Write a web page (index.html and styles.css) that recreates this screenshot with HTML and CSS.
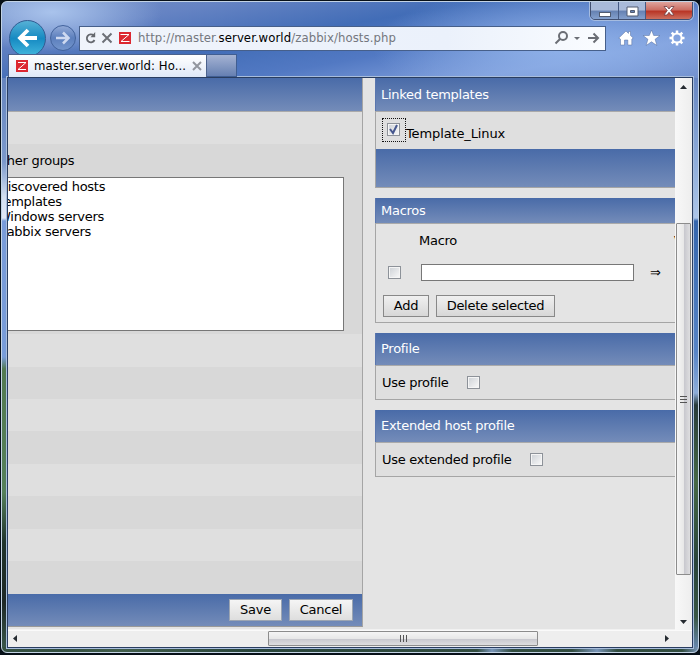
FILE: index.html
```
<!DOCTYPE html>
<html lang="en">
<head>
<meta charset="utf-8">
<title>master.server.world: Hosts</title>
<link rel="stylesheet" href="styles.css">
</head>
<body>
<div class="window">
  <div class="controls">
    <span class="control min"><svg width="14" height="8"><rect x="1.5" y="2.5" width="11" height="4" fill="#fff" stroke="#515b70"/></svg></span>
    <span class="control max"><svg width="13" height="11"><path fill="#fff" fill-rule="evenodd" stroke="#515b70" d="M1 1h11v9H1zM4.500 4.500v2h4v-2z"/></svg></span>
    <span class="control close"><svg width="14" height="12"><path d="M2 1.500h3L7 4l2-2.500h3L8.700 5.500 12 10H9L7 7.300 5 10H2l3.300-4.500z" fill="#fff" stroke="#6e3c43" stroke-width=".8"/></svg></span>
  </div>
  <header class="toolbar">
    <span class="back"><svg width="38" height="38" viewBox="0 0 38 38"><path d="M28 19H12M19 11l-8 8 8 8" fill="none" stroke="#fff" stroke-width="3.800"/></svg></span>
    <span class="forward"><svg width="26" height="26" viewBox="0 0 26 26"><path d="M6 13h12M13 7.500l5.500 5.500-5.500 5.500" fill="none" stroke="#ced9f0" stroke-width="2.500"/></svg></span>
    <div class="address">
      <svg class="reload" width="12" height="14" viewBox="0 0 12 14"><path d="M8.700 4.500A4 4 0 1 0 9.500 9" fill="none" stroke="#66696f" stroke-width="1.800"/><path d="M10.200 1v5.300H5.500z" fill="#66696f"/></svg>
      <svg class="stop" width="12" height="12" viewBox="0 0 12 12"><path d="m1.500 1.500 9 9m0-9-9 9" stroke="#6d7077" stroke-width="2"/></svg>
      <svg class="zicon" width="12" height="12"><path fill="#dc2730" d="M0 0h12v12H0z"/><path d="M1.500 2.500h8.500L2 9.500h8.500" fill="none" stroke="#fff"/></svg>
      <span class="url">http://master.<b>server.world</b>/zabbix/hosts.php</span>
      <svg class="tools" width="48" height="16" viewBox="0 0 48 16"><g fill="none" stroke="#6b6e75" stroke-width="2"><circle cx="9" cy="6" r="4"/><path d="m6 9-4.500 4.500M34 8h9M39.500 3.500 44 8l-4.500 4.500"/></g><path fill="#6b6e75" d="M20 7h6l-3 3z"/></svg>
    </div>
    <div class="actions">
      <svg width="16" height="16" viewBox="0 0 16 16"><path d="M.8 8 8 1l2.500 2.400V1.500h2v4L15.200 8l-1.400 1.100V15h-4v-5H6.500v5h-4V9.200z" fill="#fff" stroke="#526d9f" stroke-width=".5"/></svg>
      <svg width="17" height="16" viewBox="0 0 17 16"><path d="m8.500 0 2.200 5.500H17l-4.900 3.800 1.800 6.200-5.400-3.700-5.400 3.700 1.800-6.200L0 5.500h6.300z" fill="#fff" stroke="#526d9f" stroke-width=".5"/></svg>
      <svg width="16" height="16" viewBox="0 0 16 16"><g fill="none" stroke="#fff"><circle cx="8" cy="8" r="4.600" stroke-width="2"/><path stroke-width="2.500" d="M8 .5v3M8 12.500v3M.5 8h3M12.500 8h3M2.700 2.700l2 2M11.300 11.300l2 2M2.700 13.300l2-2M11.300 4.700l2-2"/></g></svg>
    </div>
  </header>
  <div class="tabs">
    <div class="tab">
      <svg width="12" height="12"><path fill="#dc2730" d="M0 0h12v12H0z"/><path d="M2 2.500h8L2 9.500h8" fill="none" stroke="#fff"/></svg>
      <span class="tab-title">master.server.world: Ho...</span>
      <svg width="10" height="10"><path d="m1 1 8 8m0-8L1 9" stroke="#92969e" stroke-width="2"/></svg>
    </div>
    <div class="newtab"></div>
  </div>
  <div class="viewport">
    <main class="page">
      <section class="groups">
        <div class="band top"></div>
        <div class="row light first"></div>
        <div class="choices">
          <div class="label">Other groups</div>
          <div class="listbox"><div>Discovered hosts</div><div>Templates</div><div>Windows servers</div><div>Zabbix servers</div></div>
        </div>
        <div class="stripes"></div>
        <div class="band submit"><span class="button">Save</span><span class="button">Cancel</span></div>
      </section>
      <section class="side">
        <div class="panel linked">
          <h2 class="band">Linked templates</h2>
          <div class="template"><span class="focus"><span class="check"><svg width="11" height="11"><path d="m2 5 3 4 4-8" fill="none" stroke="#46578e" stroke-width="2"/></svg></span></span><span class="name">Template_Linux</span></div>
          <div class="band foot"></div>
        </div>
        <div class="panel macros">
          <h2 class="band">Macros</h2>
          <div class="macro-head"><span>Macro</span><span class="value">Value</span></div>
          <div class="macro-row"><span class="check"></span><span class="field"></span><span class="arrow">⇒</span></div>
          <div class="macro-actions"><span class="button">Add</span><span class="button">Delete selected</span></div>
        </div>
        <div class="panel profile">
          <h2 class="band">Profile</h2>
          <div class="option"><span>Use profile</span><span class="check"></span></div>
        </div>
        <div class="panel extended">
          <h2 class="band">Extended host profile</h2>
          <div class="option"><span>Use extended profile</span><span class="check"></span></div>
        </div>
      </section>
    </main>
    <div class="vscroll">
      <svg class="up" width="7" height="4"><path fill="#252a30" d="M0 4h7L3.500 0z"/></svg>
      <div class="vthumb"><svg width="8" height="9"><path d="M0 1.500h7M0 4.500h7M0 7.500h7" stroke="#555"/></svg></div>
      <svg class="down" width="7" height="4"><path fill="#252a30" d="M0 0h7L3.500 4z"/></svg>
    </div>
    <div class="hscroll">
      <svg width="4" height="7"><path fill="#252a30" d="M4 0v7L0 3.500z"/></svg>
      <div class="hthumb"><svg width="9" height="8"><path d="M1.500 0v7M4.500 0v7M7.500 0v7" stroke="#555"/></svg></div>
      <svg class="right" width="4" height="7"><path fill="#252a30" d="M0 0v7l4-3.500z"/></svg>
    </div>
  </div>
</div>
</body>
</html>
```
FILE: styles.css
```
* { box-sizing: border-box; }
body { margin: 0; width: 700px; height: 655px; overflow: hidden; background: #071018; font: 13px/15px "DejaVu Sans", sans-serif; letter-spacing: -.27px; color: #000; }
svg { display: block; flex: none; }
.window {
  position: relative; width: 698px; height: 652px; margin: 1px; padding: 18px 6px 0; overflow: hidden;
  border: 1px solid #c3d3e5; border-radius: 6px;
  background:
    radial-gradient(ellipse 110px 40px at 50px 10px, #a9c3ec 0, transparent 100%) 0 0 / 100% 76px no-repeat,
    radial-gradient(ellipse 190px 60px at 560px 45px, #8fb1e9 0, transparent 100%) 0 0 / 100% 76px no-repeat,
    linear-gradient(170deg, #7591c8 0, #6583c3 20%, #426db7 42%, #5279c3 60%, #7f9edb 80%, #6f8dca 100%) 0 0 / 100% 76px no-repeat,
    linear-gradient(90deg, #344f40 0 65px, #425e4c 120px, #28443a 250px, #314c3f 475px, #7895b8 490px, #314c3f 510px 570px, #7895b8 595px, #314c3f 615px 680px, #7895b8) 0 645px / 100% 6px no-repeat,
    linear-gradient(#6685bf 76px, #7b99cc 160px, #d3dff1 195px, #e1e8f5 216px, #799cda 219px, #789cd8 355px, #537a51 367px, #55805a 490px, #20342c 540px, #1e2825 600px, #3c5b4e) 0 0 / 7px 100% no-repeat,
    linear-gradient(#6786c2 76px, #8fadda 160px, #acc5e8 216px, #3566ad 219px, #5784c5 350px, #8dadd9 391px, #293c3b 403px, #466845 480px, #29443a 560px, #395644 615px, #6e8fbd) right 0 / 7px 100% no-repeat;
}
.controls { position: absolute; top: -1px; right: 5px; width: 103px; height: 19px; display: flex; border: 1px solid #414f70; border-radius: 0 0 5px 5px; overflow: hidden; box-shadow: 0 0 0 1px #a6bce0; }
.control { height: 18px; display: flex; align-items: center; justify-content: center; border-right: 1px solid #465a83; background: linear-gradient(#a9bad9 0 45%, #6581b2 50%, #88a4d0); }
.min { width: 28px; padding-top: 5px; }
.max { width: 27px; }
.close { flex: 1; border: 0; background: linear-gradient(#dfa49d 0, #cb6c61 45%, #b93324 50%, #cf7766); }
.toolbar { display: flex; align-items: center; height: 36px; padding-left: 1px; }
.back { width: 37px; height: 37px; flex: none; border-radius: 50%; overflow: hidden; border: 1px solid #315c92; background: linear-gradient(#56b1d6, #168ac2 50%, #42b6dd); display: flex; align-items: center; justify-content: center; }
.forward { width: 26px; height: 26px; flex: none; margin-left: 4px; border-radius: 50%; border: 1px solid #42639c; background: linear-gradient(#91a9d7, #5c7fbd 50%, #7496cd); display: flex; align-items: center; justify-content: center; }
.address { width: 527px; height: 25px; flex: none; margin-left: 3px; border: 1px solid #465f8a; background: linear-gradient(90deg, #f0f4fb, #ebf1fb 70%, #fafcff); display: flex; align-items: center; padding-left: 5px; }
.stop { margin-left: 4px; }
.zicon { margin-left: 6px; }
.url { margin-left: 7px; width: 416px; font: 13px/18px "DejaVu Sans Condensed", "DejaVu Sans", sans-serif; font-stretch: condensed; letter-spacing: .07px; color: #74777e; white-space: nowrap; }
.url b { font-weight: 400; color: #000; }
.actions { display: flex; gap: 9px; margin-left: 12px; }
.tabs { display: flex; height: 23px; margin-top: -2px; position: relative; }
.tab { width: 199px; height: 23px; display: flex; align-items: center; padding-left: 7px; border: solid #4b628d; border-width: 1px 1px 0; background: linear-gradient(#fff, #dfe8f7); }
.tab-title { margin-left: 6px; width: 158px; font: 13px/18px "DejaVu Sans Condensed", "DejaVu Sans", sans-serif; font-stretch: condensed; letter-spacing: .08px; white-space: nowrap; }
.newtab { width: 30px; border: 1px solid #405e92; border-left: 0; background: linear-gradient(#a5b3d3, #6680b2); }
.viewport { width: 686px; height: 571px; margin-left: -1px; display: grid; grid-template-columns: 667px 17px; grid-template-rows: 552px 17px; border: 1px solid #293d60; outline: 1px solid #a8bddc; background: #eee; overflow: hidden; }
.page { display: flex; overflow: hidden; background: #e4e4e4; border-bottom: 1px solid #f1f1f1; }
.groups { width: 355px; height: 549px; flex: none; border-right: 1px solid #a5a5a5; border-bottom: 1px solid #999; overflow: hidden; }
.band { margin: 0; height: 33px; padding: 0 6px; font: 13px/33px "DejaVu Sans", sans-serif; color: #fff; background: linear-gradient(#496ba8, #748cb9); }
.top { height: 34px; border-bottom: 1px solid #aaa; }
.first { height: 32px; background: #dfdfdf; }
.choices { height: 190px; padding-top: 9px; background: #d8d8d8; }
.label { height: 24px; margin-left: -16px; white-space: nowrap; }
.listbox { width: 338px; height: 154px; margin-left: -2px; border: 1px solid #777; background: #fff; padding-top: 1px; text-indent: -9px; }
.stripes { height: 260px; background: repeating-linear-gradient(#dfdfdf 0 32.500px, #d8d8d8 32.500px 65px); }
.submit { height: 32px; display: flex; justify-content: flex-end; align-items: center; gap: 7px; padding-right: 9px; }
.button { height: 22px; flex: none; border: 1px solid #888; background: linear-gradient(#f0f0f0, #d7d7d7); color: #000; line-height: 20px; text-align: center; }
.submit .button { border-color: #9ca5b2; background: linear-gradient(#f5f5f5, #dedede); }
.submit .button:first-child { width: 53px; }
.submit .button:last-child { width: 64px; }
.side { flex: 1; margin-left: 12px; overflow: hidden; }
.panel { margin-bottom: 10px; border: solid #a5a5a5; border-width: 0 0 1px 1px; background: #dfdfdf; }
.panel h2 { letter-spacing: -.27px; box-shadow: -1px 0 #5a76ae; padding-left: 5px; }
.linked { height: 110px; }
.template { height: 38px; display: flex; border-top: 1px solid #aaa; padding: 6px 0 0 6px; }
.name { padding-top: 8px; letter-spacing: -.12px; }
.focus { width: 24px; height: 24px; flex: none; border: 1px dotted #111; display: flex; padding: 4px; }
.check { width: 13px; height: 13px; flex: none; border: 1px solid #8d9299; box-shadow: inset 0 0 0 1px #f5f5f5; background: linear-gradient(135deg, #ccd0d5, #fafafa); }
.foot { height: 38px; }
.macros { height: 125px; background: #e4e4e4; }
.macros h2 { height: 25px; line-height: 25px; }
.macro-head { height: 37px; border-top: 1px solid #aaa; padding: 9px 0 0 43px; display: flex; }
.value { margin-left: 217px; white-space: nowrap; }
.macro-row { height: 25px; display: flex; align-items: center; padding-left: 12px; }
.field { width: 213px; height: 17px; margin-left: 20px; border: 1px solid #777; background: #fff; }
.arrow { margin-left: 16px; }
.macro-actions { display: flex; gap: 7px; margin: 10px 0 0 7px; }
.macro-actions .button:first-child { width: 46px; }
.macro-actions .button:last-child { width: 119px; }
.profile { height: 67px; }
.extended { height: 67px; }
.profile h2, .extended h2 { height: 32px; line-height: 32px; }
.option { height: 34px; border-top: 1px solid #aaa; display: flex; align-items: center; padding-left: 6px; gap: 18px; }
.vscroll { display: flex; flex-direction: column; align-items: center; background: linear-gradient(90deg, #f8f8f8, #eee); }
.up { margin-top: 7px; }
.vthumb { width: 15px; height: 352px; margin-top: 134px; border: 1px solid #8c8c8c; border-radius: 1px; background: linear-gradient(90deg, #f5f5f5, #e8e8e8 50%, #c8c8ce 55%, #dedee0); display: flex; align-items: center; justify-content: center; }
.down { margin-top: 45px; }
.hscroll { grid-column: 1 / 3; display: flex; align-items: center; padding: 0 0 1px 5px; border-top: 1px solid #fafafa; background: #eee; }
.hthumb { height: 15px; width: 270px; margin-left: 251px; border: 1px solid #8c8c8c; border-radius: 1px; background: linear-gradient(#f5f5f5, #e8e8e8 50%, #c8c8ce 55%, #dedee0); display: flex; align-items: center; justify-content: center; }
.right { margin-left: 127px; }
```
